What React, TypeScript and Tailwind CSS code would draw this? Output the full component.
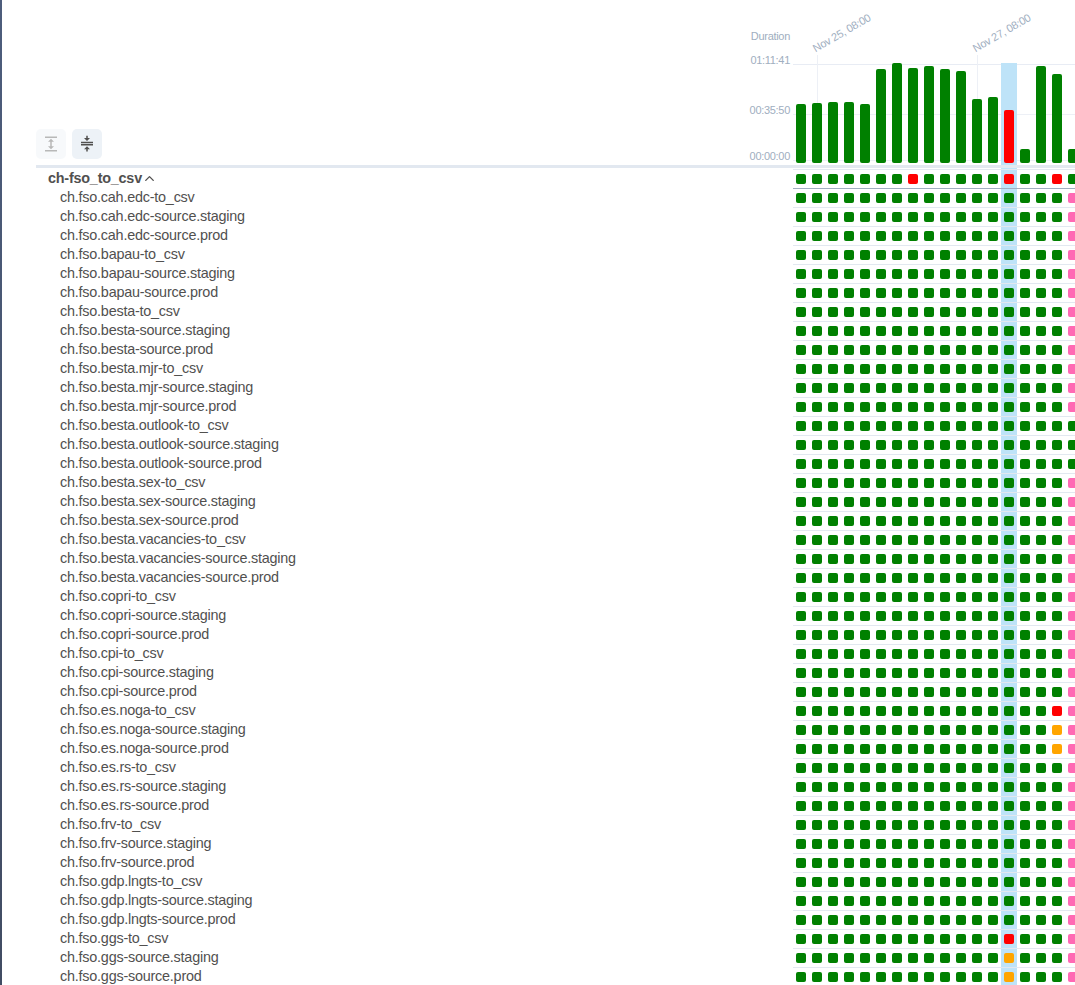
import React from "react";
import { MdExpand, MdCompress } from "react-icons/md";
import { FiChevronUp } from "react-icons/fi";

type State = "g" | "r" | "o" | "p";

const fills: Record<State, string> = {
  g: "bg-[#008000]",
  r: "bg-[#ff0000]",
  o: "bg-[#ffa500]",
  p: "bg-[#ff69b4]",
};

const SELECTED = 13;

const durations = [59, 60, 61, 61, 59, 94, 100, 95, 97, 94, 92, 64, 66, 53, 14, 97, 89, 14];

const groups = [
  "cah.edc",
  "bapau",
  "besta",
  "besta.mjr",
  "besta.outlook",
  "besta.sex",
  "besta.vacancies",
  "copri",
  "cpi",
  "es.noga",
  "es.rs",
  "frv",
  "gdp.lngts",
  "ggs",
];

const steps = ["to_csv", "source.staging", "source.prod"];

const states = (group: string, step: number): State[] => {
  const row: State[] = Array<State>(17).fill("g");
  row.push(group === "besta.outlook" ? "g" : "p");
  if (group === "es.noga") row[16] = step === 0 ? "r" : "o";
  if (group === "ggs") row[SELECTED] = step === 0 ? "r" : "o";
  return row;
};

const rows = groups.flatMap((group) =>
  steps.map((step, i) => ({ name: `ch.fso.${group}-${step}`, states: states(group, i) })),
);

const dagStates: State[] = "gggggggrgggggrggrg".split("") as State[];

function Cells({ items, border }: { items: State[]; border: string }) {
  return (
    <div className={`flex h-[19px] w-[282px] shrink-0 overflow-hidden border-b ${border}`}>
      {items.map((s, i) => (
        <div
          key={i}
          className={`flex h-[18px] w-4 shrink-0 justify-center pt-1 ${i === SELECTED ? "bg-[#bee3f8]" : ""}`}
        >
          <div className={`h-[10px] w-[10px] rounded-[2px] ${fills[s]}`} />
        </div>
      ))}
    </div>
  );
}

function Tick({ label }: { label: string }) {
  return (
    <div className="relative h-[108px] w-px bg-[#edf0f6]">
      <span className="absolute -top-[14px] left-0 origin-bottom-left -rotate-[30deg] text-[11px] leading-[14px] tracking-[-0.28px] whitespace-nowrap text-[#a0aec0]">
        {label}
      </span>
    </div>
  );
}

export default function App() {
  return (
    <div className="flex h-[985px] w-[1075px] overflow-hidden bg-white font-['Liberation_Sans',Arial,sans-serif] text-[#51504f]">
      <div className="w-[2px] shrink-0 bg-linear-to-b from-[#4d5d7c] to-[#414c63]" />
      <div className="ml-[34px] flex w-[1039px] shrink-0 flex-col">
        <header className="flex h-[168px] shrink-0 border-b-[3px] border-[#e2e8f0]">
          <div className="flex w-[700px] items-end gap-[6px] pb-[6px]">
            <button className="flex h-[30px] w-[30px] items-center justify-center rounded-[5px] bg-[#edf2f7] opacity-40">
              <MdExpand size={18} />
            </button>
            <button className="flex h-[30px] w-[30px] items-center justify-center rounded-[5px] bg-[#edf2f7]">
              <MdCompress size={18} />
            </button>
          </div>
          <div className="flex w-[54px] flex-col items-end text-[11px] leading-[14px] tracking-[-0.3px] text-[#a0aec0]">
            <span className="mt-[29px]">Duration</span>
            <span className="mt-[10px]">01:11:41</span>
            <span className="mt-[36px]">00:35:50</span>
            <span className="mt-[32px]">00:00:00</span>
          </div>
          <div className="relative ml-[3px] h-[165px] w-[282px]">
            <div className="absolute inset-0 flex flex-col">
              <div className="mt-[64px] h-px bg-[#e8ecf4]" />
              <div className="mt-[49px] h-px bg-[#edf0f6]" />
              <div className="mt-[45px] h-px bg-[#edf0f6]" />
            </div>
            <div className="absolute inset-0 flex gap-[159px] pt-[55px] pl-[24px]">
              <Tick label="Nov 25, 08:00" />
              <Tick label="Nov 27, 08:00" />
            </div>
            <div className="absolute inset-0 flex items-end overflow-hidden">
              {durations.map((d, i) => (
                <div
                  key={i}
                  className={`flex h-[102px] w-4 shrink-0 items-end justify-center pb-[2px] ${i === SELECTED ? "bg-[#bee3f8]" : ""}`}
                >
                  <div
                    className={`w-[10px] rounded-[2px] ${i === SELECTED ? fills.r : fills.g}`}
                    style={{ height: d }}
                  />
                </div>
              ))}
            </div>
          </div>
        </header>
        <main className="flex">
          <div className="flex w-[757px] flex-col pt-[1px] text-[14.4px] leading-[19px] tracking-[-0.22px]">
            <div className="flex h-[19px] items-center pl-3 font-bold">
              ch-fso_to_csv
              <FiChevronUp size={15} strokeWidth={2.2} />
            </div>
            {rows.map((r) => (
              <div key={r.name} className="h-[19px] pl-6 whitespace-nowrap">
                {r.name}
              </div>
            ))}
          </div>
          <div className="flex flex-col">
            <div className="flex h-[2px] w-[282px] border-b border-[#e2e8f0]">
              <div className="ml-[208px] w-4 bg-[#bee3f8]" />
            </div>
            <Cells items={dagStates} border="border-[#a0aec0]" />
            {rows.map((r) => (
              <Cells key={r.name} items={r.states} border="border-[#e2e8f0]" />
            ))}
          </div>
        </main>
      </div>
    </div>
  );
}
